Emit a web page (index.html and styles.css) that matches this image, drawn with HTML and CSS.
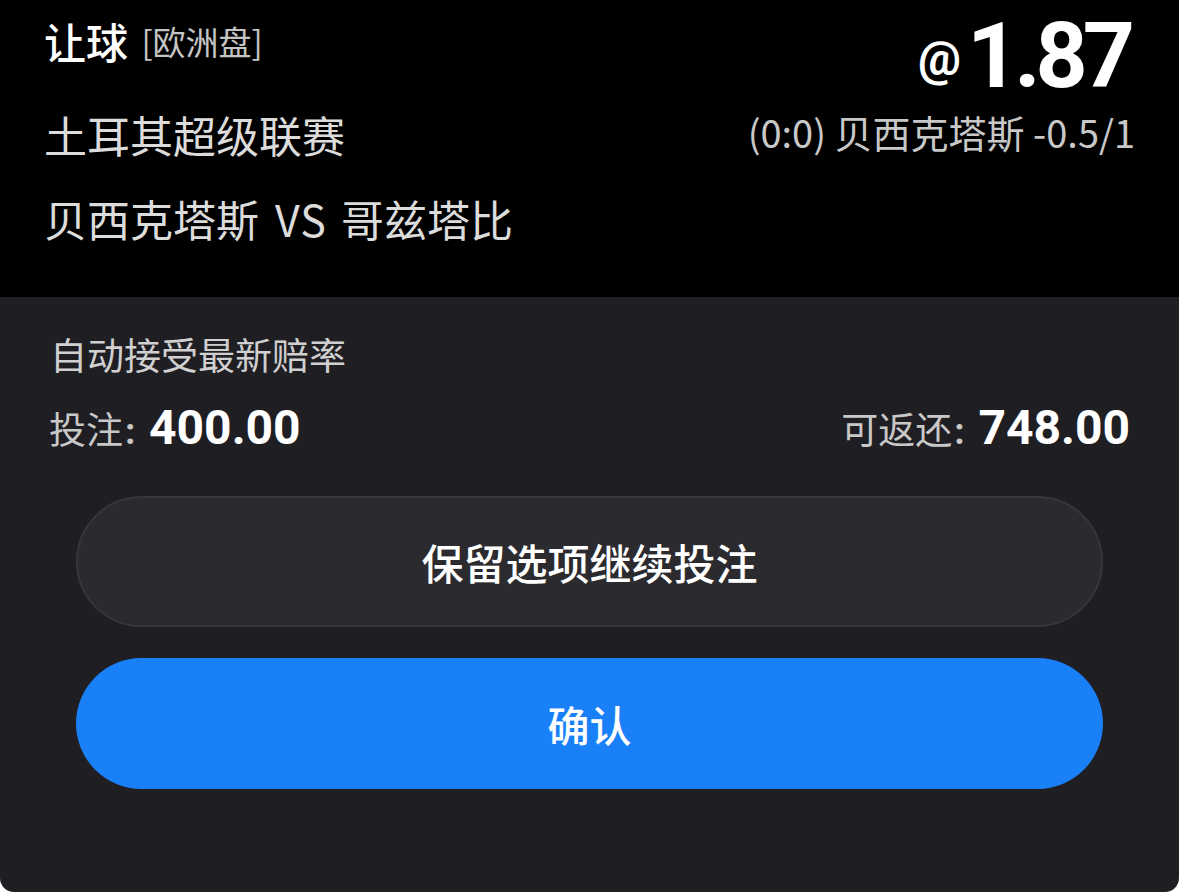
FILE: index.html
```html
<!DOCTYPE html>
<html lang="zh-CN">
<head>
  <meta charset="UTF-8" />
  <meta name="viewport" content="width=device-width, initial-scale=1.0"/>
  <title>投注确认</title>
  <link rel="stylesheet" href="styles.css">
</head>
<body>
  <div class="slip">
    <section class="head">
      <div class="row top">
        <div class="market">让球 <span class="odds-type">[欧洲盘]</span></div>
        <div class="odds"><span class="at">@</span>1.87</div>
      </div>
      <div class="row league">
        <div class="league-name">土耳其超级联赛</div>
        <div class="pick">(0:0) 贝西克塔斯 -0.5/1</div>
      </div>
      <div class="row teams">贝西克塔斯<span class="vs">VS</span>哥兹塔比</div>
    </section>

    <section class="panel">
      <div class="auto">自动接受最新赔率</div>
      <div class="amounts">
        <div class="amount"><span class="label">投注<b>:</b></span> <span class="num">400.00</span></div>
        <div class="amount"><span class="label">可返还<b>:</b></span> <span class="num">748.00</span></div>
      </div>
      <button class="btn keep">保留选项继续投注</button>
      <button class="btn confirm">确认</button>
    </section>
  </div>
</body>
</html>
```

FILE: styles.css
```css
body { margin: 0; background: #fff; font-family: "Noto Sans CJK SC", "Noto Sans", sans-serif; }
.slip { width: 1179px; height: 892px; display: flex; flex-direction: column; }

.head { background: #000; height: 297px; box-sizing: border-box; padding: 11px 44px 0; color: #fff; }
.row { display: flex; justify-content: space-between; align-items: center; }
.row.top { align-items: flex-start; }
.market { font-size: 42px; line-height: 42px; font-weight: 500; margin-top: 9px; }
.odds-type { font-size: 33px; font-weight: 400; color: #c4c4c4; vertical-align: 4px; margin-left: 4px; }
.odds { font-family: Roboto, "Liberation Sans", sans-serif; font-weight: 700; font-size: 91px; line-height: 78px; margin-top: 6px; letter-spacing: -5px; padding-right: 5px; }
.at { font-size: 48px; margin-right: 6px; letter-spacing: 0; vertical-align: 12px; }

.league { margin-top: 3px; height: 66px; }
.league-name { font-size: 43px; color: #dcdcdc; }
.pick { font-size: 38px; line-height: 40px; color: #c8c8c8; margin-top: -4px; }
.teams { font-size: 43px; line-height: 66px; color: #dcdcdc; margin-top: 18px; justify-content: flex-start; }
.vs { margin: 0 14px 0 16px; letter-spacing: 1px; }

.panel { flex: 1; background: #1f1e23; border-radius: 0 0 14px 14px; padding: 0 76px; display: flex; flex-direction: column; }
.auto { font-size: 37px; line-height: 50px; color: #d0d0d0; margin: 32px 0 0 -26px; }
.amounts { display: flex; justify-content: space-between; align-items: baseline; margin: 20px -27px 0 -27px; }
.label { font-size: 37px; color: #c8c8c8; }
.label b { font-family: Roboto, sans-serif; font-weight: 700; margin-left: 2px; }
.num { font-family: Roboto, "Liberation Sans", sans-serif; font-weight: 700; font-size: 48px; color: #fff; margin-left: 10px; }

.btn { height: 131px; border-radius: 66px; font-family: "Noto Sans CJK SC", sans-serif; font-size: 42px; font-weight: 500; color: #fff; box-sizing: border-box; cursor: pointer; }
.keep { background: #2b2a2f; border: 2px solid #37363b; margin-top: 40px; }
.confirm { background: #1a80f8; border: none; margin-top: 31px; }
```
